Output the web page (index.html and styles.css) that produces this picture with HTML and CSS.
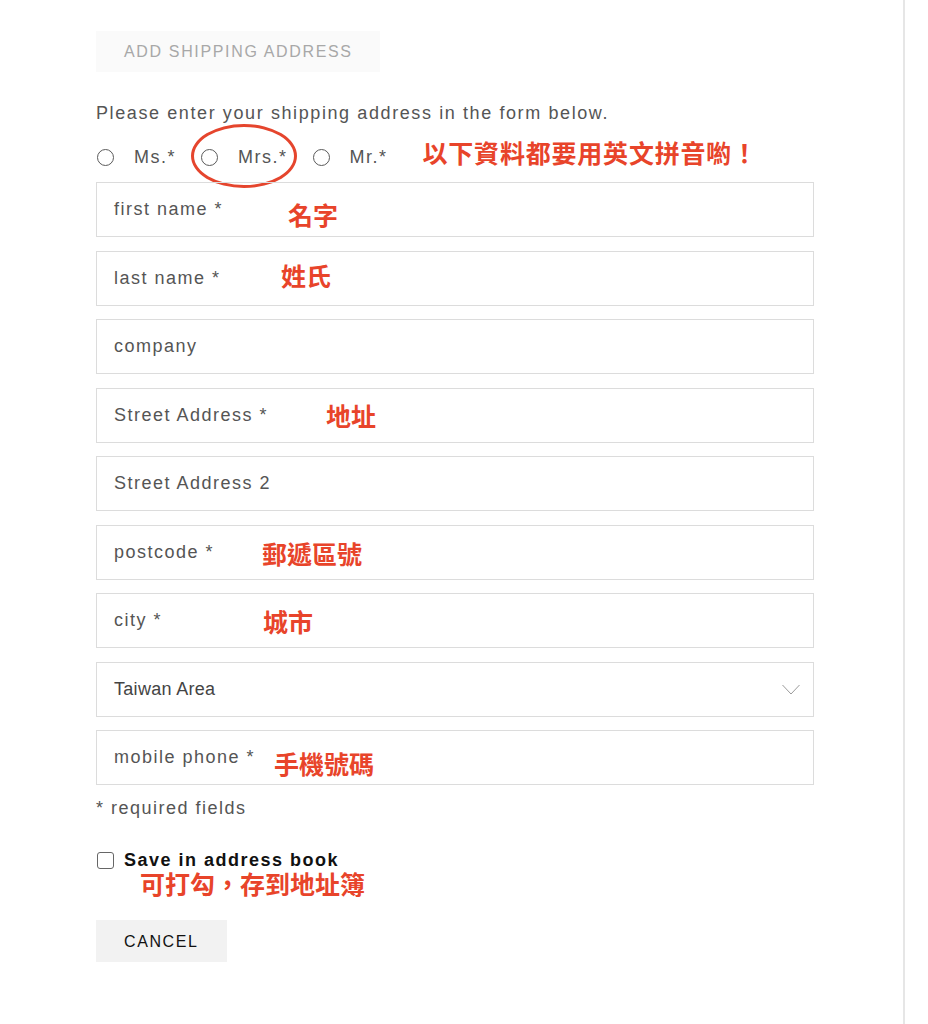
FILE: index.html
```html
<!DOCTYPE html>
<html lang="zh-Hant">
<head>
<meta charset="utf-8">
<title>Add shipping address</title>
<link rel="stylesheet" href="styles.css">
</head>
<body>
<div class="page">
  <main class="form-col">
    <div class="btn btn-add">ADD SHIPPING ADDRESS</div>
    <p class="intro">Please enter your shipping address in the form below.</p>
    <div class="salutation">
      <label class="radio"><span class="circle"></span><span class="rlabel">Ms.*</span></label>
      <label class="radio mrs"><span class="circle"></span><span class="rlabel">Mrs.*</span><span class="ring"></span></label>
      <label class="radio"><span class="circle"></span><span class="rlabel">Mr.*</span></label>
      <span class="note note-main">以下資料都要用英文拼音喲！</span>
    </div>
    <div class="fields">
      <div class="field">first name *<span class="note n-first">名字</span></div>
      <div class="field">last name *<span class="note n-last">姓氏</span></div>
      <div class="field">company</div>
      <div class="field">Street Address *<span class="note n-street">地址</span></div>
      <div class="field">Street Address 2</div>
      <div class="field">postcode *<span class="note n-post">郵遞區號</span></div>
      <div class="field">city *<span class="note n-city">城市</span></div>
      <div class="field select"><span class="select-text">Taiwan Area</span>
        <svg class="chevron" width="18" height="11" viewBox="0 0 18 11"><polyline points="0.5,1 9,10 17.5,1" fill="none" stroke="#9a9a9a" stroke-width="1"/></svg>
      </div>
      <div class="field">mobile phone *<span class="note n-mobile">手機號碼</span></div>
    </div>
    <p class="required">* required fields</p>
    <label class="save"><span class="checkbox"></span><span class="save-text">Save in address book</span></label>
    <p class="note note-save">可打勾，存到地址簿</p>
    <div class="btn btn-cancel">CANCEL</div>
  </main>
  <div class="divider"></div>
</div>
</body>
</html>
```

FILE: styles.css
```css
html, body {
  margin: 0;
  padding: 0;
  background: #ffffff;
}
body {
  font-family: "Liberation Sans", Arial, sans-serif;
  color: #555555;
}
.page {
  display: flex;
  width: 928px;
  height: 1024px;
}
.form-col {
  box-sizing: border-box;
  width: 903px;
  padding: 31px 0 0 96px;
  display: flex;
  flex-direction: column;
  align-items: flex-start;
}
.divider {
  width: 2px;
  height: 1024px;
  background: #e6e6e6;
}
.btn {
  font-family: "Liberation Sans", Arial, sans-serif;
  font-size: 16px;
  padding: 0 28px;
}
.btn-add {
  height: 41px;
  line-height: 42px;
  background: #fafafa;
  color: #a8a8a8;
  letter-spacing: 1.65px;
  padding-right: 27px;
}
.intro {
  margin: 31px 0 0;
  font-size: 18px;
  line-height: 20px;
  letter-spacing: 1.6px;
  color: #555;
}
.salutation {
  margin-top: 24px;
  height: 20px;
  display: flex;
  align-items: center;
}
.radio {
  position: relative;
  display: flex;
  align-items: center;
  margin-right: 24px;
}
.circle {
  box-sizing: border-box;
  width: 17px;
  height: 17px;
  margin-left: 1px;
  border: 1px solid #5a5a5a;
  border-radius: 50%;
}
.rlabel {
  margin-left: 20px;
  font-size: 18px;
  line-height: 20px;
  letter-spacing: 1.5px;
}
.ring {
  position: absolute;
  left: -9px;
  top: -23px;
  width: 106px;
  height: 64px;
  box-sizing: border-box;
  border: 3px solid #e5452d;
  border-radius: 50%;
}
.note {
  font-family: "Noto Sans CJK TC", "Noto Sans CJK SC", sans-serif;
  font-weight: 700;
  font-size: 25px;
  line-height: 26px;
  color: #e8442a;
}
.note-main {
  margin-left: 11px;
  margin-top: -10px;
  letter-spacing: 0.8px;
}
.fields {
  margin-top: 15px;
  display: flex;
  flex-direction: column;
  gap: 13.5px;
}
.field {
  position: relative;
  box-sizing: border-box;
  width: 718px;
  height: 55px;
  border: 1px solid #dcdcdc;
  padding-left: 17px;
  display: flex;
  align-items: center;
  font-size: 18px;
  letter-spacing: 1.5px;
  color: #555;
}
.field .note {
  position: absolute;
  top: 50%;
  letter-spacing: 0;
}
.n-first { left: 191px; margin-top: -9px; }
.n-last { left: 184px; margin-top: -16px; }
.n-street { left: 229px; margin-top: -13px; }
.n-post { left: 165px; margin-top: -12px; }
.n-city { left: 166px; margin-top: -13px; }
.n-mobile { left: 177px; margin-top: -8px; }
.select {
  justify-content: space-between;
  padding-right: 13px;
}
.select-text {
  letter-spacing: 0.3px;
  color: #444;
}
.chevron {
  display: block;
}
.required {
  margin: 13px 0 0;
  font-size: 18px;
  line-height: 20px;
  letter-spacing: 1.5px;
  color: #555;
}
.save {
  margin-top: 32px;
  height: 20px;
  display: flex;
  align-items: center;
}
.checkbox {
  box-sizing: border-box;
  width: 17px;
  height: 17px;
  margin-left: 1px;
  border: 1px solid #666;
  border-radius: 3px;
}
.save-text {
  margin-left: 10px;
  font-size: 18px;
  font-weight: 700;
  letter-spacing: 1.5px;
  color: #111;
}
.note-save {
  margin: 1px 0 0 44px;
  line-height: 24px;
}
.btn-cancel {
  margin-top: 25px;
  height: 42px;
  line-height: 43px;
  background: #f2f2f2;
  color: #111;
  letter-spacing: 1.6px;
}
```
